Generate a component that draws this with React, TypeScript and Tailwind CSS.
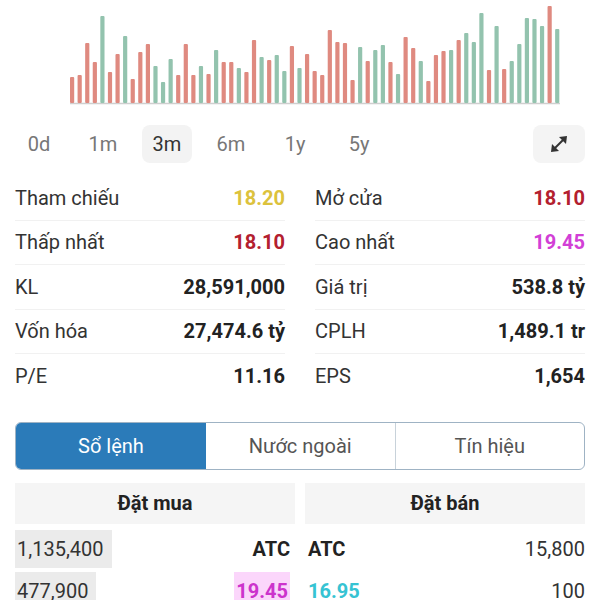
import React from "react";

// ── Chart data: [top of bar (px from chart top), up?] ──────────────────────────
const BARS: [number, boolean][] = [
  [77, false], [75, false], [43, false], [62, false], [16, true], [72, false],
  [54, false], [36, true], [79, false], [52, false], [44, false], [66, true],
  [82, true], [59, true], [75, false], [44, false], [75, false], [66, true],
  [74, false], [50, true], [62, false], [62, false], [68, true], [72, false],
  [40, false], [57, true], [60, false], [55, true], [71, true], [46, false],
  [68, true], [54, false], [71, false], [75, false], [30, false], [42, false],
  [43, false], [80, false], [47, true], [61, false], [50, true], [45, true],
  [62, false], [74, true], [37, false], [48, false], [61, true], [81, false],
  [55, false], [51, false], [50, true], [40, false], [33, true], [42, true],
  [13, true], [70, false], [26, true], [69, false], [61, true], [44, true],
  [18, true], [19, true], [26, true], [6, false], [29, true],
];

const BASE = 103;

function VolumeChart() {
  return (
    <svg width="500" height="106" viewBox="0 0 500 106" className="ml-[68px] block">
      <line x1="2" y1={BASE + 0.5} x2="492" y2={BASE + 0.5} stroke="#cfcfcf" strokeWidth="1.5" />
      {BARS.map(([top, up], i) => (
        <rect
          key={i}
          x={2 + i * 7.58}
          y={top}
          width="4.2"
          height={BASE - top}
          rx="1"
          fill={up ? "#93c3ae" : "#df8a80"}
        />
      ))}
    </svg>
  );
}

const PERIODS = ["0d", "1m", "3m", "6m", "1y", "5y"];

function ExpandIcon() {
  return (
    <svg width="24" height="24" viewBox="0 0 24 24" fill="#333">
      <line x1="7" y1="17" x2="17" y2="7" stroke="#333" strokeWidth="2" />
      <path d="M20 4 L19 12 L12 5 Z" />
      <path d="M4 20 L5 12 L12 19 Z" />
    </svg>
  );
}

type Stat = { label: string; value: string; color?: string };

const LEFT: Stat[] = [
  { label: "Tham chiếu", value: "18.20", color: "text-[#dcc23c]" },
  { label: "Thấp nhất", value: "18.10", color: "text-[#b3202f]" },
  { label: "KL", value: "28,591,000" },
  { label: "Vốn hóa", value: "27,474.6 tỷ" },
  { label: "P/E", value: "11.16" },
];

const RIGHT: Stat[] = [
  { label: "Mở cửa", value: "18.10", color: "text-[#b3202f]" },
  { label: "Cao nhất", value: "19.45", color: "text-[#d23fd6]" },
  { label: "Giá trị", value: "538.8 tỷ" },
  { label: "CPLH", value: "1,489.1 tr" },
  { label: "EPS", value: "1,654" },
];

function StatColumn({ items }: { items: Stat[] }) {
  return (
    <div className="flex flex-col">
      {items.map((s, i) => (
        <div
          key={s.label}
          className={`flex h-[44.5px] items-center justify-between ${
            i < items.length - 1 ? "border-b border-[#f1f1f1]" : ""
          }`}
        >
          <span className="text-[20px] text-[#333]">{s.label}</span>
          <span className={`text-[20px] font-bold ${s.color ?? "text-[#222]"}`}>{s.value}</span>
        </div>
      ))}
    </div>
  );
}

export default function App() {
  return (
    <div className="h-[600px] w-[600px] overflow-hidden bg-white font-['Roboto',sans-serif]">
      {/* Volume chart */}
      <VolumeChart />

      {/* Period selector */}
      <div className="mt-[19px] flex items-center pl-[14px] pr-[15px]">
        <div className="flex items-center gap-[14px]">
          {PERIODS.map((p) => (
            <div
              key={p}
              className={`flex h-[38px] w-[50px] items-center justify-center rounded-lg text-[20px] ${
                p === "3m" ? "bg-[#f3f3f3] text-[#333]" : "text-[#777]"
              }`}
            >
              {p}
            </div>
          ))}
        </div>
        <div className="ml-auto flex h-[38px] w-[52px] items-center justify-center rounded-lg bg-[#f4f4f4]">
          <ExpandIcon />
        </div>
      </div>

      {/* Stats */}
      <div className="mt-[13px] grid grid-cols-2 gap-x-[30px] px-[15px]">
        <StatColumn items={LEFT} />
        <StatColumn items={RIGHT} />
      </div>

      {/* Tabs */}
      <div className="mx-[15px] mt-[23px] flex h-[48px] overflow-hidden rounded-md border border-[#9fb3c4]">
        <div className="flex w-[190px] items-center justify-center bg-[#2b7bb9] text-[20px] text-white">
          Sổ lệnh
        </div>
        <div className="flex flex-1 items-center justify-center border-r border-[#c8d2da] text-[20px] text-[#555]">
          Nước ngoài
        </div>
        <div className="flex flex-1 items-center justify-center text-[20px] text-[#555]">Tín hiệu</div>
      </div>

      {/* Order book */}
      <div className="mt-[13px] grid grid-cols-2 gap-x-[10px] px-[15px]">
        <div className="flex h-[41px] items-center justify-center bg-[#f5f5f5] text-[20px] font-bold text-[#222]">
          Đặt mua
        </div>
        <div className="flex h-[41px] items-center justify-center bg-[#f5f5f5] text-[20px] font-bold text-[#222]">
          Đặt bán
        </div>
      </div>

      <div className="mt-[6px] grid grid-cols-2 gap-x-[10px] px-[15px]">
        <div className="flex h-[38px] items-center justify-between pr-[5px]">
          <span className="flex h-full items-center bg-[#ebebeb] pr-[8px] pl-[2px] text-[20px] text-[#333]">1,135,400</span>
          <span className="text-[20px] font-bold text-[#222]">ATC</span>
        </div>
        <div className="flex h-[38px] items-center justify-between pl-[3px]">
          <span className="text-[20px] font-bold text-[#222]">ATC</span>
          <span className="text-[20px] text-[#333]">15,800</span>
        </div>
        <div className="mt-[4px] flex h-[38px] items-center justify-between pr-[5px]">
          <span className="flex h-full items-center bg-[#ebebeb] pr-[8px] pl-[2px] text-[20px] text-[#333]">477,900</span>
          <span className="flex h-full items-center bg-[#fbd6fb] px-[2px] text-[20px] font-bold text-[#cc33cc]">19.45</span>
        </div>
        <div className="mt-[4px] flex h-[38px] items-center justify-between pl-[3px]">
          <span className="text-[20px] font-bold text-[#36c3d3]">16.95</span>
          <span className="text-[20px] text-[#333]">100</span>
        </div>
      </div>
    </div>
  );
}
